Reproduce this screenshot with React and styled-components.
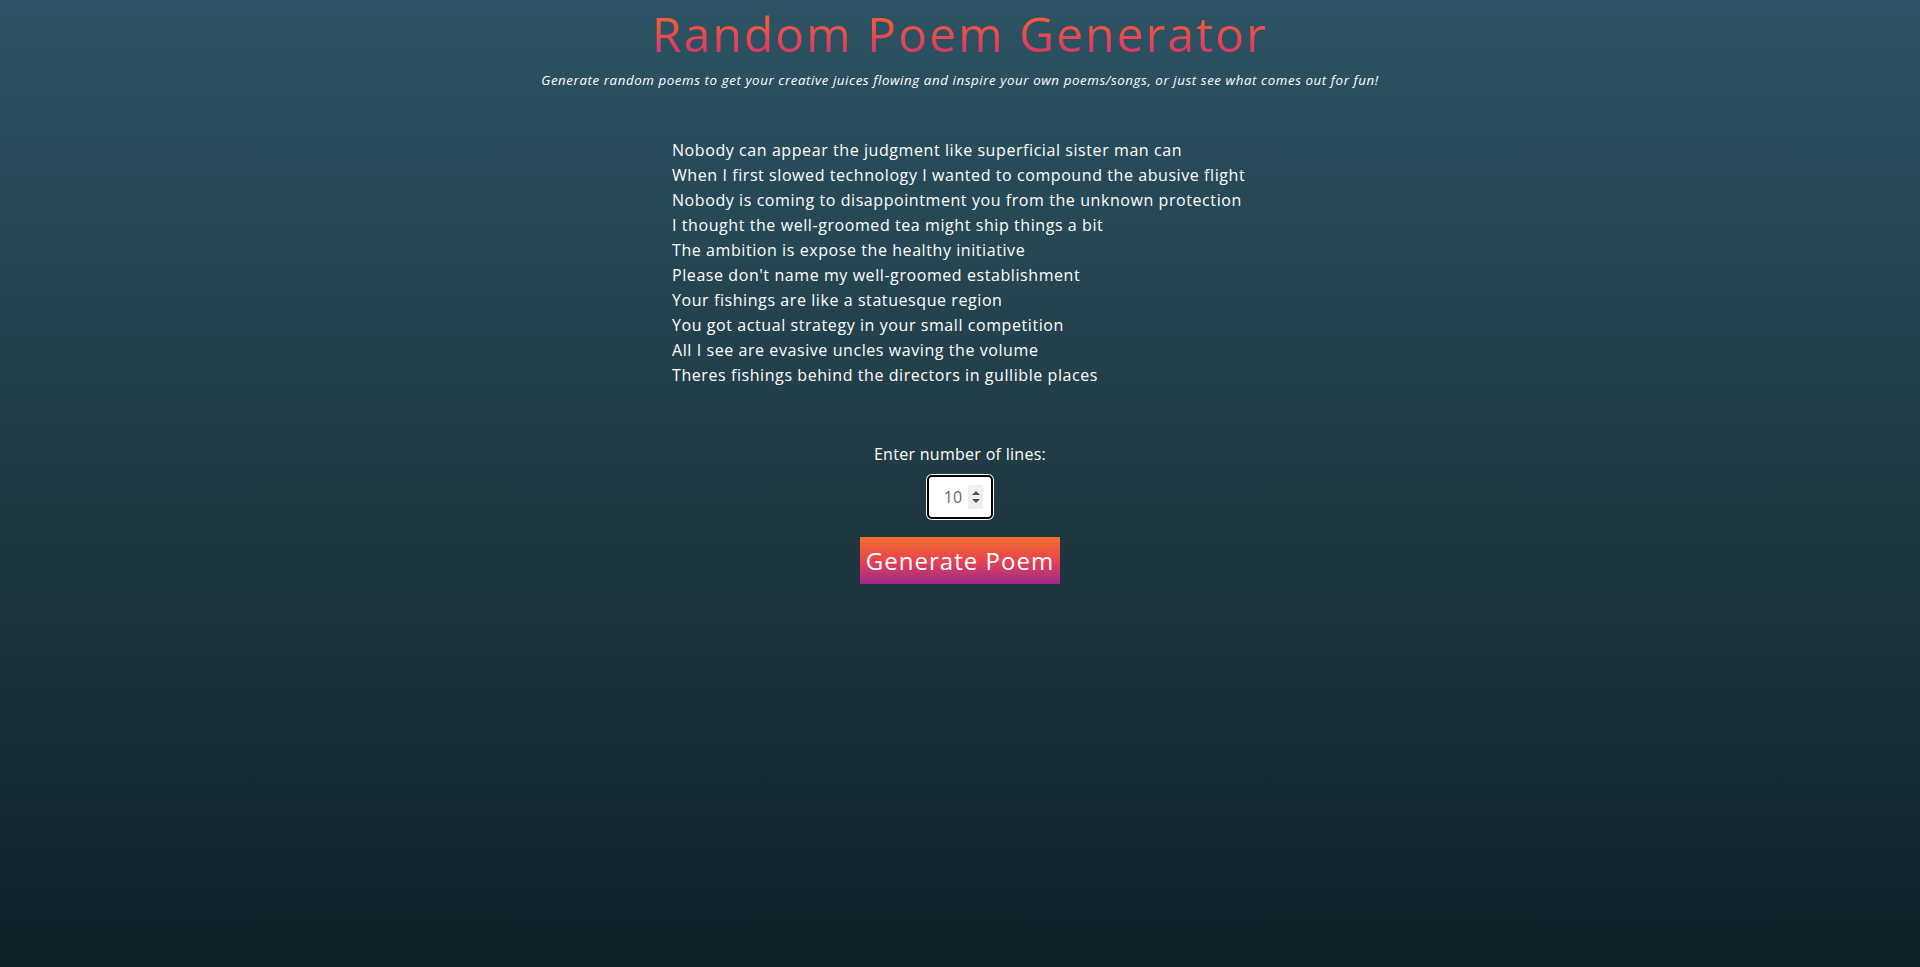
import React, { useState } from "react";
import styled, { createGlobalStyle } from "styled-components";

const GlobalStyle = createGlobalStyle`
  html, body { margin: 0; padding: 0; }
  body {
    min-height: 100vh;
    background: linear-gradient(to top, #0f2027 0%, #203a43 50%, #2c5364 100%);
    font-family: "Open Sans", "Liberation Sans", sans-serif;
    color: #ffffff;
  }
`;

const Page = styled.main`
  display: flex;
  flex-direction: column;
  align-items: center;
  text-align: center;
  padding-top: 4px;
`;

const Title = styled.h1`
  margin: 0;
  font-size: 48px;
  line-height: 60px;
  font-weight: 400;
  letter-spacing: 0.043em;
  background: linear-gradient(to bottom, #f8672c 0%, #f25a3c 30%, #e03f5e 70%, #c8307a 100%);
  -webkit-background-clip: text;
  background-clip: text;
  color: transparent;
`;

const Subtitle = styled.p`
  margin: 6px 0 0;
  font-size: 13.33px;
  line-height: 20px;
  font-style: italic;
  letter-spacing: 0.043em;
`;

const Poem = styled.div`
  width: 30%;
  margin-top: 48px;
  text-align: left;
`;

const Line = styled.div`
  font-size: 16px;
  line-height: 25px;
  letter-spacing: 0.036em;
`;

const Label = styled.label`
  margin-top: 54px;
  font-size: 16px;
  line-height: 24px;
  letter-spacing: 0.018em;
`;

const InputBox = styled.div`
  margin-top: 9px;
  display: flex;
  align-items: center;
  box-sizing: border-box;
  width: 66px;
  height: 44px;
  padding: 0 8px 0 10px;
  background: #ffffff;
  border: 2px solid #000000;
  border-radius: 5px;
  box-shadow: 0 0 0 1px #ffffff;
`;

const NumberField = styled.input`
  width: 28px;
  border: none;
  outline: none;
  padding: 0;
  background: transparent;
  text-align: center;
  font-family: inherit;
  font-size: 16px;
  color: #5a6b80;
  -moz-appearance: textfield;
  &::-webkit-inner-spin-button,
  &::-webkit-outer-spin-button { -webkit-appearance: none; margin: 0; }
`;

const Spinner = styled.div`
  margin-left: auto;
  width: 15px;
  height: 24px;
  background: #efefef;
  display: flex;
  flex-direction: column;
  align-items: center;
  justify-content: center;
  gap: 4px;
`;

const Arrow = styled.span`
  width: 0;
  height: 0;
  border-left: 4px solid transparent;
  border-right: 4px solid transparent;
  ${(p) => (p.$down ? "border-top: 4px solid #505050;" : "border-bottom: 4px solid #505050;")}
`;

const Button = styled.button`
  margin-top: 18px;
  width: 200px;
  height: 47px;
  border: none;
  padding: 0;
  cursor: pointer;
  color: #ffffff;
  font-family: inherit;
  font-size: 24px;
  letter-spacing: 0.043em;
  background: linear-gradient(to bottom, #f5702a 0%, #e8434f 50%, #9b2a8c 100%);
`;

const lines = [
  "Nobody can appear the judgment like superficial sister man can",
  "When I first slowed technology I wanted to compound the abusive flight",
  "Nobody is coming to disappointment you from the unknown protection",
  "I thought the well-groomed tea might ship things a bit",
  "The ambition is expose the healthy initiative",
  "Please don't name my well-groomed establishment",
  "Your fishings are like a statuesque region",
  "You got actual strategy in your small competition",
  "All I see are evasive uncles waving the volume",
  "Theres fishings behind the directors in gullible places",
];

export default function App() {
  const [count, setCount] = useState(10);
  return (
    <>
      <GlobalStyle />
      <Page>
        <Title>Random Poem Generator</Title>
        <Subtitle>
          Generate random poems to get your creative juices flowing and inspire your own poems/songs, or just see what comes out for fun!
        </Subtitle>
        <Poem>
          {lines.map((l, i) => (
            <Line key={i}>{l}</Line>
          ))}
        </Poem>
        <Label htmlFor="lines">Enter number of lines:</Label>
        <InputBox>
          <NumberField
            id="lines"
            type="number"
            value={count}
            onChange={(e) => setCount(e.target.value)}
          />
          <Spinner>
            <Arrow />
            <Arrow $down />
          </Spinner>
        </InputBox>
        <Button>Generate Poem</Button>
      </Page>
    </>
  );
}
